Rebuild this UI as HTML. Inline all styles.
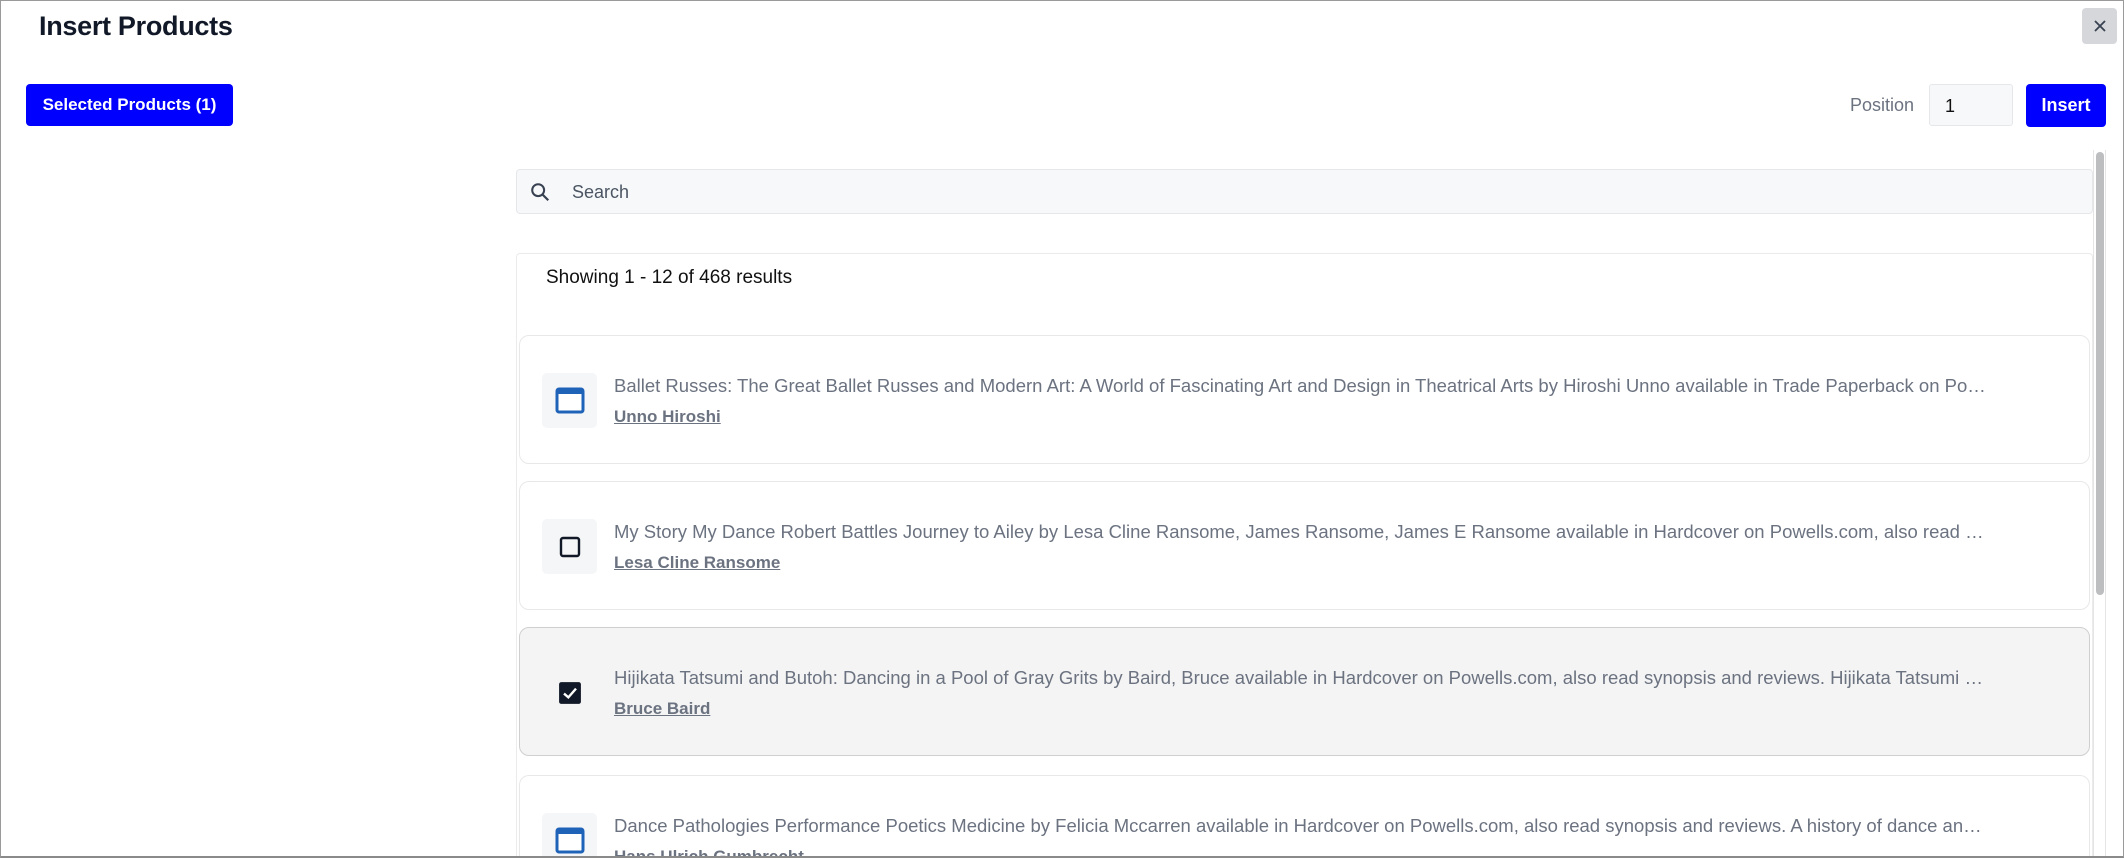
<!DOCTYPE html>
<html><head><meta charset="utf-8"><style>
*{box-sizing:border-box;margin:0;padding:0}
html,body{width:2124px;height:858px;overflow:hidden;background:#fff;font-family:"Liberation Sans",Arial,sans-serif}
.wrap{position:relative;width:2124px;height:858px;overflow:hidden}
.frame{position:absolute;left:0;top:0;width:2124px;height:858px;border:1px solid #9a9a9a;border-bottom:2px solid #8a8a8a;z-index:5;pointer-events:none}
.abs{position:absolute}
h1{position:absolute;left:39px;top:11px;font-size:27px;font-weight:bold;color:#111827;letter-spacing:-0.3px}
.btn{position:absolute;background:#0000ff;color:#fff;border-radius:4px;font-size:17px;font-weight:bold;display:flex;align-items:center;justify-content:center}
.close{position:absolute;left:2082px;top:8px;width:35px;height:36px;background:#d5d7db;border-radius:4px;display:flex;align-items:center;justify-content:center}
.lbl{position:absolute;left:1850px;top:95px;font-size:18px;color:#6b7280}
.inp{position:absolute;left:1929px;top:84px;width:84px;height:42px;background:#f7f8f9;border:1px solid #e5e7eb;border-radius:3px;font-size:18px;color:#111;padding:11px 0 0 15px}
.search{position:absolute;left:516px;top:169px;width:1577px;height:45px;background:#f7f8f9;border:1px solid #e5e7eb;border-radius:4px}
.search span{position:absolute;left:55px;top:12px;font-size:18px;color:#4b5563}
.track{position:absolute;left:2093px;top:150px;width:13px;height:706px;border-left:1px solid #e5e5e5;border-right:1px solid #e5e5e5}
.thumb{position:absolute;left:2096px;top:152px;width:8px;height:443px;background:#bcbec0;border-radius:4px}
.res{position:absolute;left:516px;top:253px;width:1577px;height:603px;border:1px solid #ebebeb;border-bottom:none;border-radius:4px 4px 0 0}
.show{position:absolute;left:546px;top:267px;font-size:19px;color:#111}
.card{position:absolute;left:519px;width:1571px;height:129px;border:1px solid #e8e8e8;border-radius:10px;background:#fff}
.card.sel{background:#f4f4f4;border-color:#cfcfcf}
.card.last{height:81px;border-bottom:none;border-radius:10px 10px 0 0;overflow:hidden}
.ib{position:absolute;left:22px;top:37px;width:55px;height:55px;background:#f5f6f7;border-radius:5px;display:flex;align-items:center;justify-content:center}
.sel .ib{background:#f4f4f4}
.t{position:absolute;left:94px;top:39px;width:1372px;font-size:18.5px;color:#6b7280;white-space:nowrap;overflow:hidden;text-overflow:ellipsis}
.a{position:absolute;left:94px;top:71px;font-size:17px;font-weight:bold;color:#6b7280;text-decoration:underline}
</style></head><body><div class="wrap">
<div class="frame"></div>
<h1>Insert Products</h1>
<div class="close"><svg width="14" height="14" viewBox="0 0 14 14"><path d="M2 2L12 12M12 2L2 12" stroke="#374151" stroke-width="1.8"/></svg></div>
<div class="btn" style="left:26px;top:84px;width:207px;height:42px">Selected Products (1)</div>
<div class="lbl">Position</div>
<div class="inp">1</div>
<div class="btn" style="left:2026px;top:84px;width:80px;height:43px;font-size:18px">Insert</div>
<div class="search"><svg class="abs" style="left:12px;top:11px" width="22" height="22" viewBox="0 0 24 24"><circle cx="10" cy="10" r="6.5" fill="none" stroke="#374151" stroke-width="2.2"/><path d="M15 15L21 21" stroke="#374151" stroke-width="2.4"/></svg><span>Search</span></div>
<div class="track"></div><div class="thumb"></div>
<div class="res"></div>
<div class="show">Showing 1 - 12 of 468 results</div>

<div class="card" style="top:335px"><div class="ib"><svg width="30" height="27" viewBox="0 0 30 27"><rect x="2" y="2" width="26" height="23" rx="2" fill="#fff" stroke="#1f63b8" stroke-width="3"/><rect x="2" y="2" width="26" height="5" fill="#1f63b8"/></svg></div>
<div class="t">Ballet Russes: The Great Ballet Russes and Modern Art: A World of Fascinating Art and Design in Theatrical Arts by Hiroshi Unno available in Trade Paperback on Powells.com, also read synopsis and reviews.</div><div class="a">Unno Hiroshi</div></div>

<div class="card" style="top:481px"><div class="ib"><svg width="22" height="22" viewBox="0 0 22 22"><rect x="2" y="2" width="18" height="18" rx="2" fill="none" stroke="#111827" stroke-width="2.4"/></svg></div>
<div class="t">My Story My Dance Robert Battles Journey to Ailey by Lesa Cline Ransome, James Ransome, James E Ransome available in Hardcover on Powells.com, also read synopsis and reviews.</div><div class="a">Lesa Cline Ransome</div></div>

<div class="card sel" style="top:627px"><div class="ib"><svg width="24" height="24" viewBox="0 0 22 22"><rect x="1" y="1" width="20" height="20" rx="2" fill="#111827"/><path d="M5.5 11.5L9.5 15L16.5 7" fill="none" stroke="#fff" stroke-width="2.2"/></svg></div>
<div class="t">Hijikata Tatsumi and Butoh: Dancing in a Pool of Gray Grits by Baird, Bruce available in Hardcover on Powells.com, also read synopsis and reviews. Hijikata Tatsumi was a dancer</div><div class="a">Bruce Baird</div></div>

<div class="card last" style="top:775px"><div class="ib"><svg width="30" height="27" viewBox="0 0 30 27"><rect x="2" y="2" width="26" height="23" rx="2" fill="#fff" stroke="#1f63b8" stroke-width="3"/><rect x="2" y="2" width="26" height="5" fill="#1f63b8"/></svg></div>
<div class="t">Dance Pathologies Performance Poetics Medicine by Felicia Mccarren available in Hardcover on Powells.com, also read synopsis and reviews. A history of dance and medicine in France</div><div class="a">Hans Ulrich Gumbrecht</div></div>
</div></body></html>
